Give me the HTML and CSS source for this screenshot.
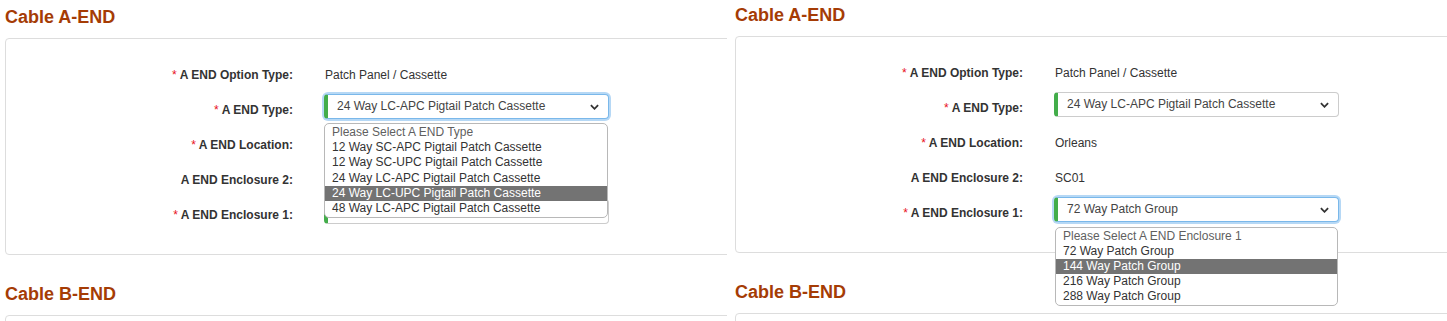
FILE: index.html
```html
<!DOCTYPE html>
<html lang="en">
<head>
<meta charset="utf-8">
<title>Cable A-END</title>
<link rel="stylesheet" href="styles.css">
</head>
<body>
<div class="page">
  <section class="panel panel-a">
    <h2 class="title">Cable A-END</h2>
    <div class="card">
      <div class="row">
        <div class="label"><span class="req">*</span> A END Option Type:</div>
        <div class="value">Patch Panel / Cassette</div>
      </div>
      <div class="row">
        <div class="label"><span class="req">*</span> A END Type:</div>
        <div class="field">
          <div class="select focus">
            <span class="select-text">24 Way LC-APC Pigtail Patch Cassette</span>
            <svg class="chev" width="10" height="6" viewBox="0 0 10 6"><path d="M1 1l4 4 4-4" fill="none" stroke="#333" stroke-width="2"/></svg>
          </div>
          <ul class="dropdown">
            <li class="placeholder">Please Select A END Type</li>
            <li>12 Way SC-APC Pigtail Patch Cassette</li>
            <li>12 Way SC-UPC Pigtail Patch Cassette</li>
            <li>24 Way LC-APC Pigtail Patch Cassette</li>
            <li class="active">24 Way LC-UPC Pigtail Patch Cassette</li>
            <li>48 Way LC-APC Pigtail Patch Cassette</li>
          </ul>
        </div>
      </div>
      <div class="row">
        <div class="label"><span class="req">*</span> A END Location:</div>
        <div class="value"></div>
      </div>
      <div class="row">
        <div class="label">A END Enclosure 2:</div>
        <div class="value"></div>
      </div>
      <div class="row">
        <div class="label"><span class="req">*</span> A END Enclosure 1:</div>
        <div class="field">
          <div class="select">
            <span class="select-text"></span>
            <svg class="chev" width="10" height="6" viewBox="0 0 10 6"><path d="M1 1l4 4 4-4" fill="none" stroke="#333" stroke-width="2"/></svg>
          </div>
        </div>
      </div>
    </div>
    <h2 class="title">Cable B-END</h2>
    <div class="card card-b"></div>
  </section>

  <section class="panel panel-b">
    <h2 class="title">Cable A-END</h2>
    <div class="card">
      <div class="row">
        <div class="label"><span class="req">*</span> A END Option Type:</div>
        <div class="value">Patch Panel / Cassette</div>
      </div>
      <div class="row">
        <div class="label"><span class="req">*</span> A END Type:</div>
        <div class="field">
          <div class="select">
            <span class="select-text">24 Way LC-APC Pigtail Patch Cassette</span>
            <svg class="chev" width="10" height="6" viewBox="0 0 10 6"><path d="M1 1l4 4 4-4" fill="none" stroke="#333" stroke-width="2"/></svg>
          </div>
        </div>
      </div>
      <div class="row">
        <div class="label"><span class="req">*</span> A END Location:</div>
        <div class="value">Orleans</div>
      </div>
      <div class="row">
        <div class="label">A END Enclosure 2:</div>
        <div class="value">SC01</div>
      </div>
      <div class="row">
        <div class="label"><span class="req">*</span> A END Enclosure 1:</div>
        <div class="field">
          <div class="select focus">
            <span class="select-text">72 Way Patch Group</span>
            <svg class="chev" width="10" height="6" viewBox="0 0 10 6"><path d="M1 1l4 4 4-4" fill="none" stroke="#333" stroke-width="2"/></svg>
          </div>
          <ul class="dropdown dropdown-low">
            <li class="placeholder">Please Select A END Enclosure 1</li>
            <li>72 Way Patch Group</li>
            <li class="active">144 Way Patch Group</li>
            <li>216 Way Patch Group</li>
            <li>288 Way Patch Group</li>
          </ul>
        </div>
      </div>
    </div>
    <h2 class="title">Cable B-END</h2>
    <div class="card card-b"></div>
  </section>
</div>
</body>
</html>
```

FILE: styles.css
```css
html, body {
  margin: 0;
  padding: 0;
  background: #fff;
}

body {
  font-family: "Liberation Sans", Arial, sans-serif;
  overflow: hidden;
}

.page {
  display: flex;
  height: 321px;
  overflow: hidden;
}

.panel {
  box-sizing: border-box;
  overflow: hidden;
  padding-left: 5px;
}

.panel-a {
  flex: none;
  width: 727px;
  margin-right: 3px;
  padding-top: 7px;
}

.panel-b {
  flex: 1;
  min-width: 0;
  padding-top: 5px;
}

.title {
  margin: 0 0 11px;
  font-size: 18px;
  line-height: 20px;
  font-weight: bold;
  color: #a53c05;
}

.card {
  width: 1000px;
  border: 1px solid #dddddd;
  border-radius: 4px;
  padding: 20px 0 29.5px;
  margin-bottom: 29px;
  display: flex;
  flex-direction: column;
  gap: 10px;
}

.card-b {
  height: 100px;
  padding: 0;
  margin-bottom: 0;
}

.row {
  display: grid;
  grid-template-columns: 287px 285px;
  column-gap: 31px;
  height: 25px;
  font-size: 12px;
  line-height: 15px;
  color: #333;
}

.label {
  text-align: right;
  font-weight: bold;
  padding-top: 9px;
  white-space: nowrap;
}

.req {
  color: #e8111b;
  font-weight: normal;
}

.value {
  padding-top: 9px;
  padding-left: 1px;
  white-space: nowrap;
}

.field {
  position: relative;
}

.select {
  box-sizing: border-box;
  height: 25px;
  border: 1px solid #cccccc;
  border-left: 4px solid #43ad4a;
  border-radius: 4px;
  padding: 0 9px 0 9px;
  display: flex;
  align-items: center;
  justify-content: space-between;
  color: #444;
  background: #fff;
  white-space: nowrap;
}

.select.focus {
  border-color: #7ab8ea;
  border-left-color: #43ad4a;
  box-shadow: 0 0 0 2px rgba(122, 184, 236, 0.55);
}

.chev {
  display: block;
  flex: none;
  width: 9px;
  height: 6px;
}

.dropdown {
  position: absolute;
  left: 0;
  top: 29px;
  width: 284px;
  box-sizing: border-box;
  margin: 0;
  padding: 1px 0;
  list-style: none;
  border: 1px solid #b8b8b8;
  border-radius: 5px;
  background: #fff;
  z-index: 2;
}

.dropdown-low {
  top: 29.5px;
  width: 283px;
  left: 1px;
}

.dropdown li {
  height: 15.2px;
  line-height: 15.2px;
  padding-left: 7px;
  color: #333;
  white-space: nowrap;
}

.dropdown li.placeholder {
  color: #5f5f5f;
}

.dropdown li.active {
  background: #737373;
  color: #fff;
}
```
